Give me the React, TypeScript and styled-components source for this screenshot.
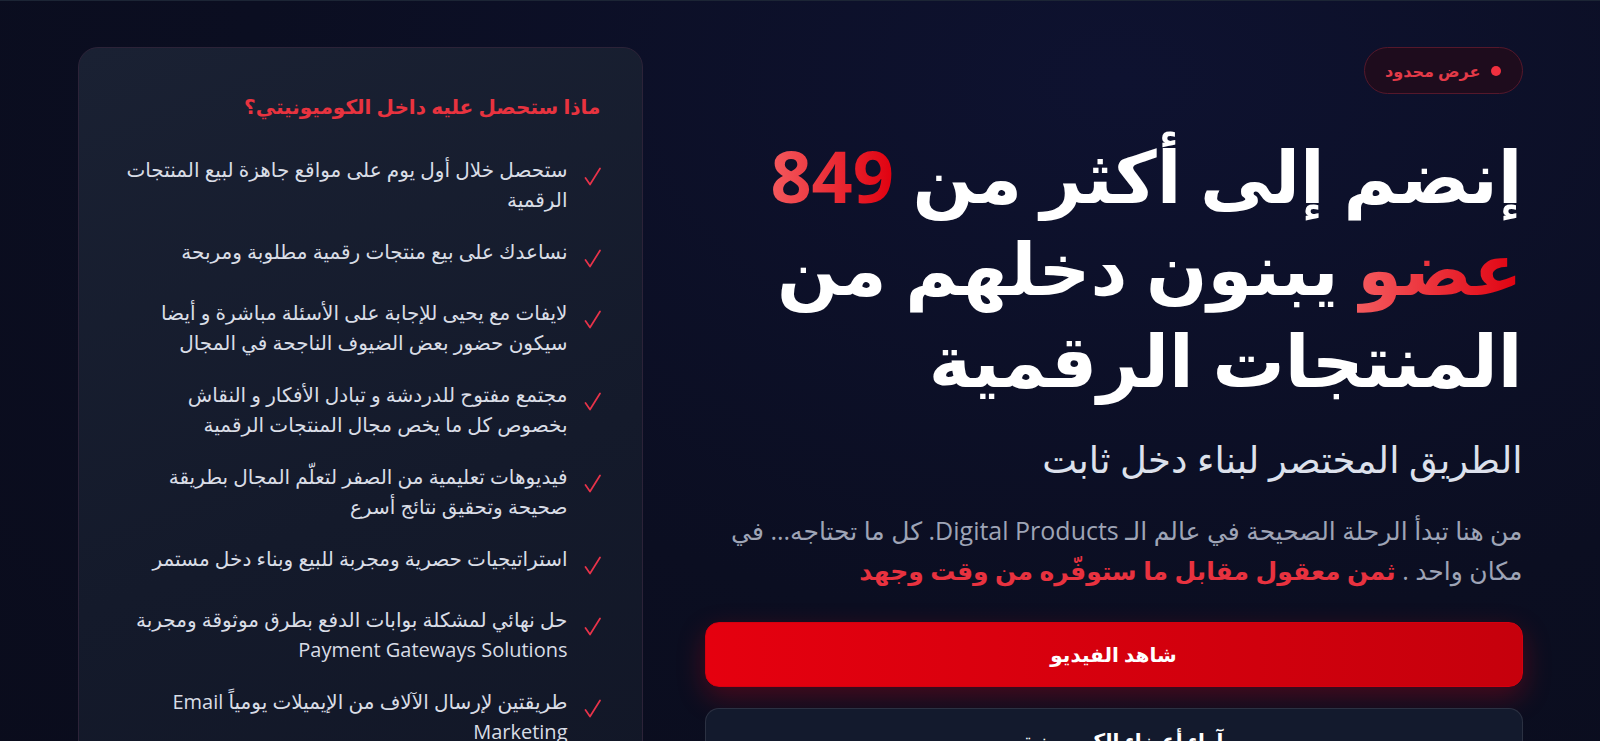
import styled, { createGlobalStyle } from "styled-components";

const GlobalStyle = createGlobalStyle`
  html, body {
    margin: 0;
    padding: 0;
    background: #0b0e21;
    overflow: hidden;
  }
  * {
    box-sizing: border-box;
  }
`;

const Page = styled.section`
  direction: rtl;
  min-height: 100vh;
  padding-top: 46px;
  background: radial-gradient(ellipse at 70% 10%, #0e1230 0%, #0b0e21 55%, #0a0c1c 100%);
  border-top: 1px solid #1c2535;
  font-family: "Open Sans", "DejaVu Sans", sans-serif;
  color: #fff;
`;

const Container = styled.div`
  width: 1445px;
  margin: 0 auto;
  display: grid;
  grid-template-columns: 818px 565px;
  gap: 62px;
  align-items: start;
`;

const Hero = styled.div`
  display: flex;
  flex-direction: column;
  align-items: flex-start;
`;

const Badge = styled.div`
  display: inline-flex;
  align-items: center;
  gap: 10px;
  height: 47px;
  padding: 0 21px 0 20px;
  border-radius: 999px;
  background: #1e0c1d;
  border: 1px solid #55182b;
  color: #e33a48;
  font-size: 16px;
  font-weight: 600;
`;

const Dot = styled.span`
  width: 10px;
  height: 10px;
  border-radius: 50%;
  background: #f0303f;
`;

const Title = styled.h1`
  margin: 35px 0 0;
  font-size: 72px;
  line-height: 92px;
  font-weight: 700;
  color: #ffffff;
`;

const Accent = styled.span`
  background: linear-gradient(270deg, #e0000f 0%, #f45a5e 100%);
  -webkit-background-clip: text;
  background-clip: text;
  color: transparent;
`;

const Subtitle = styled.h2`
  margin: 29px 0 0;
  font-size: 37px;
  line-height: 50px;
  font-weight: 400;
  color: #dde1ec;
`;

const Lead = styled.p`
  margin: 26px 0 0;
  font-size: 25px;
  line-height: 40px;
  color: #9ea4b6;
`;

const Highlight = styled.strong`
  color: #e8323f;
  font-weight: 600;
`;

const Button = styled.button<{ $variant?: "primary" | "ghost" }>`
  width: 100%;
  height: 65px;
  border-radius: 14px;
  font-family: inherit;
  font-size: 20px;
  font-weight: 700;
  color: #fff;
  cursor: pointer;
  border: 1px solid
    ${(p) => (p.$variant === "ghost" ? "rgba(255,255,255,0.1)" : "#d4000f")};
  background: ${(p) =>
    p.$variant === "ghost"
      ? "#131a2d"
      : "linear-gradient(270deg, #c6000c 0%, #e5000f 100%)"};
  box-shadow: ${(p) =>
    p.$variant === "ghost" ? "none" : "0 10px 28px rgba(220, 0, 20, 0.3)"};
  margin-top: ${(p) => (p.$variant === "ghost" ? "21px" : "32px")};
`;

const Card = styled.aside`
  padding: 39px 41px 40px;
  border-radius: 20px;
  background: linear-gradient(160deg, #1a2133 0%, #141a2b 60%, #121727 100%);
  border: 1px solid #2c2338;
`;

const CardTitle = styled.h3`
  margin: 0;
  font-size: 20px;
  line-height: 40px;
  font-weight: 600;
  color: #e8333f;
`;

const List = styled.ul`
  list-style: none;
  margin: 28px 0 0;
  padding: 0;
  display: flex;
  flex-direction: column;
  gap: 22px;
`;

const Item = styled.li`
  display: flex;
  align-items: flex-start;
  gap: 16px;
  min-height: 39px;
  font-size: 20px;
  line-height: 30px;
  color: #d9dde6;
`;

const CheckIcon = styled.svg`
  flex: none;
  width: 17px;
  height: 19px;
  margin-top: 12px;
`;

const Check = () => (
  <CheckIcon viewBox="0 0 17 19" fill="none">
    <polyline
      points="1.5,11 6,17.5 16,1.5"
      stroke="#e8334a"
      strokeWidth="1.7"
      strokeLinecap="round"
      strokeLinejoin="round"
    />
  </CheckIcon>
);

const features = [
  "ستحصل خلال أول يوم على مواقع جاهزة لبيع المنتجات الرقمية",
  "نساعدك على بيع منتجات رقمية مطلوبة ومربحة",
  "لايفات مع يحيى للإجابة على الأسئلة مباشرة و أيضا سيكون حضور بعض الضيوف الناجحة في المجال",
  "مجتمع مفتوح للدردشة و تبادل الأفكار و النقاش بخصوص كل ما يخص مجال المنتجات الرقمية",
  "فيديوهات تعليمية من الصفر لتعلّم المجال بطريقة صحيحة وتحقيق نتائج أسرع",
  "استراتيجيات حصرية ومجربة للبيع وبناء دخل مستمر",
  "حل نهائي لمشكلة بوابات الدفع بطرق موثوقة ومجربة Payment Gateways Solutions",
  "طريقتين لإرسال الآلاف من الإيميلات يومياً Email Marketing",
];

export default function App() {
  return (
    <>
      <GlobalStyle />
      <Page>
        <Container>
          <Hero>
            <Badge>
              <Dot />
              عرض محدود
            </Badge>
            <Title>
              إنضم إلى أكثر من <Accent>849</Accent> <Accent>عضو</Accent> يبنون
              دخلهم من المنتجات الرقمية
            </Title>
            <Subtitle>الطريق المختصر لبناء دخل ثابت</Subtitle>
            <Lead>
              من هنا تبدأ الرحلة الصحيحة في عالم الـ Digital Products. كل ما
              تحتاجه... في مكان واحد .{" "}
              <Highlight>ثمن معقول مقابل ما ستوفّره من وقت وجهد</Highlight>
            </Lead>
            <Button>شاهد الفيديو</Button>
            <Button $variant="ghost">آراء أعضاء الكوميونيتي</Button>
          </Hero>
          <Card>
            <CardTitle>ماذا ستحصل عليه داخل الكوميونيتي؟</CardTitle>
            <List>
              {features.map((text, i) => (
                <Item key={i}>
                  <Check />
                  <span>{text}</span>
                </Item>
              ))}
            </List>
          </Card>
        </Container>
      </Page>
    </>
  );
}
